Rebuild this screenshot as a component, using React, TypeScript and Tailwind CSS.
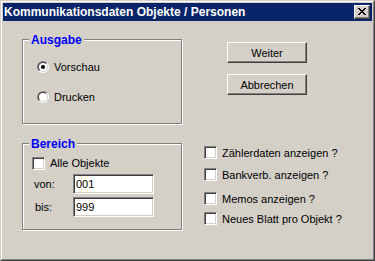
import { useId } from "react";

const raised =
  "border border-t-white border-l-white border-r-[#404040] border-b-[#404040] shadow-[inset_-1px_-1px_0_#808080]";
const sunken =
  "border border-t-[#808080] border-l-[#808080] border-r-white border-b-white shadow-[inset_1px_1px_0_#404040,inset_-1px_-1px_0_#d4d0c8] bg-white";

function Radio({ checked }: { checked?: boolean }) {
  const id = useId();
  return (
    <svg width="12" height="12" viewBox="0 0 12 12" className="shrink-0">
      <defs>
        <linearGradient id={id + "o"} x1="0" y1="0" x2="1" y2="1">
          <stop offset="0.5" stopColor="#808080" />
          <stop offset="0.5" stopColor="#ffffff" />
        </linearGradient>
        <linearGradient id={id + "i"} x1="0" y1="0" x2="1" y2="1">
          <stop offset="0.5" stopColor="#404040" />
          <stop offset="0.5" stopColor="#d4d0c8" />
        </linearGradient>
      </defs>
      <circle cx="6" cy="6" r="6" fill={`url(#${id}o)`} />
      <circle cx="6" cy="6" r="5" fill={`url(#${id}i)`} />
      <circle cx="6" cy="6" r="4" fill="#fff" />
      {checked && <circle cx="6" cy="6" r="2" fill="#000" />}
    </svg>
  );
}

function Check() {
  return <div className={`w-[13px] h-[13px] shrink-0 ${sunken}`} />;
}

function Group({ label, className, children }: { label: string; className: string; children: React.ReactNode }) {
  return (
    <div className={`relative w-[160px] border border-[#808080] shadow-[inset_1px_1px_0_#fff,1px_1px_0_#fff] ${className}`}>
      <span className="absolute -top-[7px] left-[6px] px-[2px] bg-[#d4d0c8] text-[12px] leading-[14px] font-bold text-[#0000ff]">
        {label}
      </span>
      {children}
    </div>
  );
}

export default function App() {
  return (
    <div className="w-[375px] h-[261px] bg-[#d4d0c8] border border-t-[#d4d0c8] border-l-[#d4d0c8] border-r-[#404040] border-b-[#404040] text-black font-['Liberation_Sans',Arial,sans-serif] text-[11px] leading-[14px]">
      <div className="h-full flex flex-col p-px border border-t-white border-l-white border-r-[#808080] border-b-[#808080]">
        {/* Title bar */}
        <div className="h-[18px] shrink-0 bg-[#0a246a] flex items-center justify-between pl-px pr-[2px]">
          <span className="text-white font-bold text-[12px] leading-[18px]">Kommunikationsdaten Objekte / Personen</span>
          <div className={`w-[16px] h-[14px] bg-[#d4d0c8] flex items-start pl-[3px] pt-[2px] ${raised}`}>
            <svg width="8" height="7" viewBox="0 0 8 7" shapeRendering="crispEdges">
              <path
                fill="#000"
                d="M0 0h2v1H0zM6 0h2v1H6zM1 1h2v1H1zM5 1h2v1H5zM2 2h4v1H2zM3 3h2v1H3zM2 4h4v1H2zM1 5h2v1H1zM5 5h2v1H5zM0 6h2v1H0zM6 6h2v1H6z"
              />
            </svg>
          </div>
        </div>

        {/* Client */}
        <div className="flex-1 flex">
          <div className="ml-[19px] pt-[18px] flex flex-col">
            <Group label="Ausgabe" className="h-[85px]">
              <div className="flex flex-col gap-[16px] pt-[20px] pl-[14px]">
                <div className="h-[14px] flex items-center gap-[5px]">
                  <Radio checked />
                  <span>Vorschau</span>
                </div>
                <div className="h-[14px] flex items-center gap-[5px]">
                  <Radio />
                  <span>Drucken</span>
                </div>
              </div>
            </Group>

            <Group label="Bereich" className="h-[87px] mt-[19px]">
              <div className="flex flex-col pt-[12px] pl-[9px]">
                <div className="h-[14px] flex items-center gap-[5px]">
                  <Check />
                  <span>Alle Objekte</span>
                </div>
                <div className="mt-[4px] flex items-center">
                  <span className="w-[41px] pl-[2px]">von:</span>
                  <div className={`w-[81px] h-[20px] pl-[2px] flex items-center ${sunken}`}>001</div>
                </div>
                <div className="mt-[3px] flex items-center">
                  <span className="w-[41px] pl-[3px]">bis:</span>
                  <div className={`w-[81px] h-[20px] pl-[2px] flex items-center ${sunken}`}>999</div>
                </div>
              </div>
            </Group>
          </div>

          <div className="flex flex-col">
            <div className="ml-[45px] mt-[21px] flex flex-col gap-[11px]">
              <button className={`w-[80px] h-[21px] bg-[#d4d0c8] flex items-center justify-center ${raised}`}>Weiter</button>
              <button className={`w-[80px] h-[21px] bg-[#d4d0c8] flex items-center justify-center ${raised}`}>Abbrechen</button>
            </div>

            <div className="ml-[22px] mt-[51px] flex flex-col">
              <div className="h-[13px] flex items-center gap-[5px]">
                <Check />
                <span>Zählerdaten anzeigen ?</span>
              </div>
              <div className="h-[13px] mt-[9px] flex items-center gap-[5px]">
                <Check />
                <span>Bankverb. anzeigen ?</span>
              </div>
              <div className="h-[13px] mt-[11px] flex items-center gap-[5px]">
                <Check />
                <span>Memos anzeigen ?</span>
              </div>
              <div className="h-[13px] mt-[7px] flex items-center gap-[5px]">
                <Check />
                <span>Neues Blatt pro Objekt ?</span>
              </div>
            </div>
          </div>
        </div>
      </div>
    </div>
  );
}
